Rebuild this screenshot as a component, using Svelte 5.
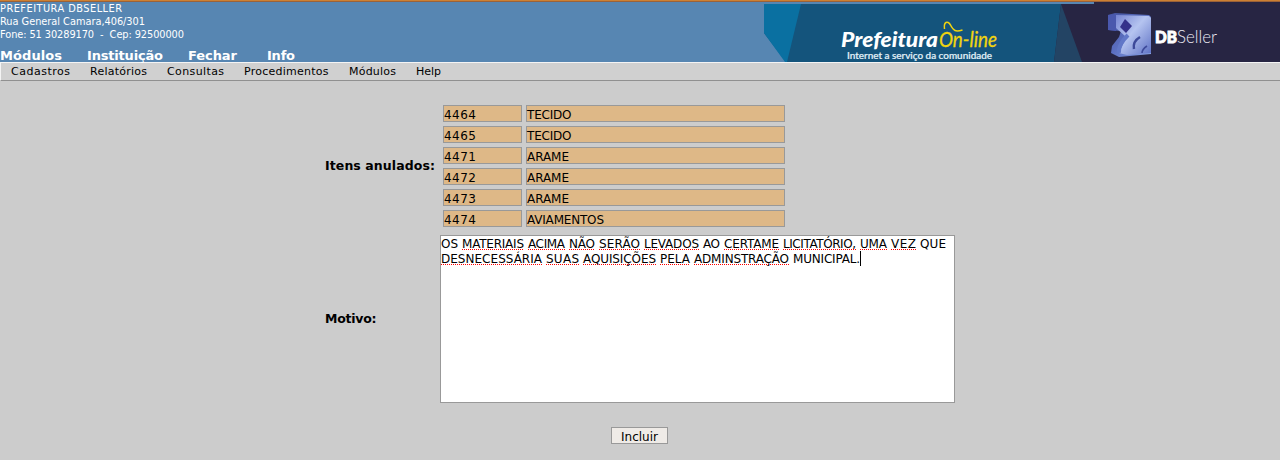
<script>
  const address = [
    { text: 'PREFEITURA DBSELLER', w: 122 },
    { text: 'Rua General Camara,406/301', w: 145 },
    { text: 'Fone: 51 30289170  -  Cep: 92500000', w: 184 }
  ];
  const nav = [
    { text: 'Módulos', w: 62, gap: 25 },
    { text: 'Instituição', w: 76, gap: 25 },
    { text: 'Fechar', w: 49, gap: 30 },
    { text: 'Info', w: 28, gap: 0 }
  ];
  const menu = [
    { text: 'Cadastros', w: 59, gap: 20 },
    { text: 'Relatórios', w: 57, gap: 20 },
    { text: 'Consultas', w: 57, gap: 20 },
    { text: 'Procedimentos', w: 84.5, gap: 20.5 },
    { text: 'Módulos', w: 47, gap: 20 },
    { text: 'Help', w: 25, gap: 0 }
  ];
  const items = [
    { code: '4464', name: 'TECIDO', w: 44.5 },
    { code: '4465', name: 'TECIDO', w: 44.5 },
    { code: '4471', name: 'ARAME', w: 42 },
    { code: '4472', name: 'ARAME', w: 42 },
    { code: '4473', name: 'ARAME', w: 42 },
    { code: '4474', name: 'AVIAMENTOS', w: 77 }
  ];
  const lines = [
    [
      ['OS', 17, 4, 0], ['MATERIAIS', 62, 4, 1], ['ACIMA', 37, 4, 1], ['NÃO', 26, 4, 1],
      ['SERÃO', 41, 4, 1], ['LEVADOS', 55, 4, 1], ['AO', 17, 4, 0], ['CERTAME', 55, 4, 1],
      ['LICITATÓRIO,', 73, 4, 1], ['UMA', 27, 4, 1], ['VEZ', 25, 4, 1], ['QUE', 26, 0, 0]
    ],
    [
      ['DESNECESSÁRIA', 101, 4, 1], ['SUAS', 33, 4, 1], ['AQUISIÇÕES', 73, 4, 1],
      ['PELA', 30, 4, 1], ['ADMINSTRAÇÃO', 95, 4, 1], ['MUNICIPAL.', 67, 0, 0]
    ]
  ];
</script>

{#snippet label(text, w, h, base)}
  <svg class="label" width={w} height={h}><text x="0" y={base} textLength={w} xml:space="preserve">{text}</text></svg>
{/snippet}

<div class="page">
  <header>
    <div class="company">
      <div class="address">
        {#each address as a}{@render label(a.text, a.w, 13, 10)}{/each}
      </div>
      <nav class="modules">
        {#each nav as n}<span style="margin-right:{n.gap}px">{@render label(n.text, n.w, 15, 12)}</span>{/each}
      </nav>
    </div>
    <svg class="banner" width="516" height="60" viewBox="764 2 516 60">
      <defs>
        <linearGradient id="face" x1="0" y1="0" x2="1" y2="1">
          <stop offset="0" stop-color="#7684d2" /><stop offset=".45" stop-color="#b5c4f0" /><stop offset="1" stop-color="#5d70c4" />
        </linearGradient>
        <linearGradient id="side" x1="0" y1="0" x2="1" y2="1">
          <stop offset="0" stop-color="#43529f" /><stop offset=".5" stop-color="#5b6fc0" /><stop offset="1" stop-color="#8ba5e6" />
        </linearGradient>
      </defs>
      <path fill="#14547c" d="M764 4h330V2h186v60H786L764 33z" />
      <path fill="#0a70a1" d="M764 4h37L787 62h-2L764 33z" />
      <path fill="#272543" d="M1061 4h33V2h186v60H1054z" />
      <path fill="#234464" d="M1061 4l21 58h-28z" />
      <text x="841" y="47" textLength="97" lengthAdjust="spacingAndGlyphs" class="prefeitura">Prefeitura</text>
      <text x="939" y="47" textLength="58" lengthAdjust="spacingAndGlyphs" class="online">On-line</text>
      <path d="M944.5 29c-1-7 3-9 6-4 3 6 5 7 12 5" fill="none" stroke="#f1d40f" stroke-width="1.5" />
      <text x="847" y="58.5" textLength="145" lengthAdjust="spacingAndGlyphs" class="slogan">Internet a serviço da comunidade</text>
      <path fill="url(#side)" d="M1108 15l7-2 34 2 2 2v37l-32 3-8-4 1-7 7-9 2-6-13-1z" />
      <path fill="url(#face)" d="M1116 15l33 1 2 2v35l-24 2-8-2 4-9 2-8-9-8z" />
      <path fill="#4a58ad" d="M1108 15l8-1v17l-8-1z" />
      <path fill="#35328a" d="M1125 19l7 7-6 7-6-6z" />
      <path d="M1134 49c-1-5 1-9 6-12" fill="none" stroke="#3d4a9a" stroke-width="2.5" />
      <path d="M1142 53c0-3 2-5 5-7" fill="none" stroke="#3d4a9a" stroke-width="1.6" />
      <path d="M1119 53c-1-6 4-13 9-18" fill="none" stroke="#6177c8" stroke-width="4" />
      <text x="1155" y="43" textLength="22" lengthAdjust="spacingAndGlyphs" class="db">DB</text>
      <text x="1177" y="43" textLength="40" lengthAdjust="spacingAndGlyphs" class="seller">Seller</text>
    </svg>
  </header>

  <div class="menubar">
    {#each menu as m}<span style="margin-right:{m.gap}px">{@render label(m.text, m.w, 15, 12)}</span>{/each}
  </div>

  <main>
    <div class="row first">
      <b class="caption">{@render label('Itens anulados:', 110, 16, 12)}</b>
      <div class="items">
        {#each items as item}
          <div class="item">
            <div class="field code">{@render label(item.code, 32, 15, 13)}</div>
            <div class="field name">{@render label(item.name, item.w, 15, 13)}</div>
          </div>
        {/each}
      </div>
    </div>
    <div class="row">
      <b class="caption">{@render label('Motivo:', 51.5, 16, 12)}</b>
      <div class="textarea">
        {#each lines as line, i}
          <div class="line">
            {#each line as [text, w, gap, wrong]}
              <span class="word" class:wrong={wrong} style="margin-right:{gap}px">{@render label(text, w, 15, 12)}</span>
            {/each}
            {#if i === 1}<i class="caret"></i>{/if}
          </div>
        {/each}
      </div>
    </div>
    <button type="button">{@render label('Incluir', 37, 15, 13)}</button>
  </main>
</div>

<style>
  :global(body) { margin: 0; background: #ccc; }
  .page { width: 1280px; height: 460px; overflow: hidden; background: #ccc; font: 12px "DejaVu Sans", sans-serif; color: #000; }
  .label { display: block; overflow: visible; fill: currentColor; }
  header { height: 60px; display: flex; justify-content: space-between; padding-top: 2px; background: linear-gradient(#cc8033 0 1px, #9b6238 1px 2px, #5786b2 2px); color: #fff; }
  .address { font-size: 9.8px; height: 46px; }
  .modules { display: flex; font-size: 13px; font-weight: bold; }
  .banner { display: block; }
  .prefeitura { font: italic 900 20.5px Lato, sans-serif; fill: #fff; }
  .online { font: italic 400 21px Lato, sans-serif; fill: #f1d40f; stroke: #f1d40f; stroke-width: .3px; }
  .slogan { font: 500 9.5px Lato, sans-serif; fill: #e5f3fa; stroke: #e5f3fa; stroke-width: .2px; }
  .db { font: 900 16.5px Lato, sans-serif; fill: #fff; stroke: #fff; stroke-width: .9px; }
  .seller { font: 300 17px Lato, sans-serif; fill: #eceaf4; }
  .menubar { height: 17px; display: flex; padding-left: 10px; background: #d0d0d0; border-top: 1px solid #f4f4f4; border-left: 1px solid #f4f4f4; border-bottom: 1px solid #909090; font-size: 11px; }
  main { width: 630px; margin-left: 325px; padding-top: 24px; }
  .row { display: flex; align-items: center; }
  .first { margin-bottom: 8px; }
  .caption { width: 115px; font-size: 12.5px; }
  .items { display: grid; gap: 4px; margin-left: 3px; }
  .item { display: flex; gap: 4px; }
  .field { box-sizing: border-box; height: 17px; border: 1px solid #999; background: #deb887; }
  .code { width: 79px; }
  .name { width: 259px; }
  .textarea { box-sizing: border-box; width: 515px; height: 168px; border: 1px solid #999; background: #fff; }
  .line { height: 15px; display: flex; }
  .word { height: 14px; box-sizing: border-box; }
  .wrong { background: repeating-linear-gradient(90deg, #f00 0 1px, transparent 1px 2px) 0 100% / 100% 1px no-repeat; }
  .caret { width: 1px; height: 15px; background: #000; }
  button { display: block; box-sizing: border-box; width: 57px; height: 17px; margin: 24px 0 0 286px; padding: 0 0 0 9px; border: 1px solid #999; background: #efebe7; font: 12px "DejaVu Sans", sans-serif; color: #000; }
</style>
